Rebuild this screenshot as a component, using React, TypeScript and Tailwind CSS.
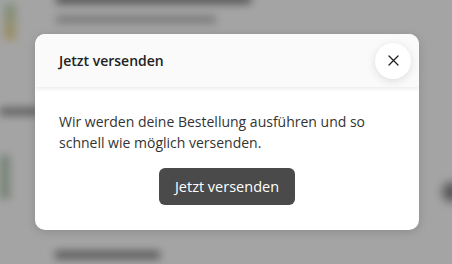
import React from "react";

export default function App() {
  return (
    <div className="relative w-[452px] h-[264px] overflow-hidden bg-white" style={{ fontFamily: '"Open Sans", "Liberation Sans", sans-serif' }}>
      {/* blurred page behind */}
      <div className="blur-[4px] w-full h-full flex flex-col">
        <div className="flex gap-10 -mt-[6px] pl-1">
          <div className="w-[12px] h-[36px] mt-[10px] bg-gradient-to-b from-[#a8cfa8] to-[#f5d070]" />
          <div className="flex flex-col gap-[12px] pt-0">
            <div className="w-[195px] h-[10px] bg-[#555]" />
            <div className="w-[160px] h-[7px] bg-[#999]" />
          </div>
        </div>
        <div className="mt-[68px] w-[40px] h-[7px] bg-[#555]" />
        <div className="mt-[40px] w-[10px] h-[44px] bg-[#9ab59a]" />
        <div className="mt-[52px] ml-[55px] w-[105px] h-[8px] bg-[#555]" />
      </div>
      <div className="absolute right-[-10px] top-[182px] w-[20px] h-[20px] rounded-full bg-[#555] blur-[5px]" />
      {/* overlay */}
      <div className="absolute inset-0 bg-[#5a5a5a]/55" />
      {/* modal */}
      <div className="absolute left-[35px] top-[34px] w-[384px] h-[196px] rounded-[10px] bg-white overflow-hidden shadow-[0_2px_10px_rgba(0,0,0,0.15)] flex flex-col">
        <div className="relative h-[53px] bg-[#fafafa] flex items-center justify-between pl-[24px] pr-[8px] shadow-[0_2px_4px_rgba(0,0,0,0.08)]">
          <span className="text-[14px] font-semibold text-[#222]">Jetzt versenden</span>
          <button className="w-[36px] h-[36px] rounded-full bg-white shadow-[0_2px_8px_rgba(0,0,0,0.12)] flex items-center justify-center">
            <svg width="11" height="11" viewBox="0 0 11 11" fill="none" stroke="#222" strokeWidth="1.3" strokeLinecap="round">
              <path d="M1 1L10 10M10 1L1 10" />
            </svg>
          </button>
        </div>
        <div className="flex-1 flex flex-col items-center px-[24px] pt-[24px] pb-[24px]">
          <p className="self-stretch text-[14px] leading-[21px] text-[#333]">
            Wir werden deine Bestellung ausführen und so schnell wie möglich versenden.
          </p>
          <button className="mt-[15px] w-[136px] h-[37px] rounded-[6px] bg-[#4a4a4a] text-white text-[14.5px]">
            Jetzt versenden
          </button>
        </div>
      </div>
    </div>
  );
}
